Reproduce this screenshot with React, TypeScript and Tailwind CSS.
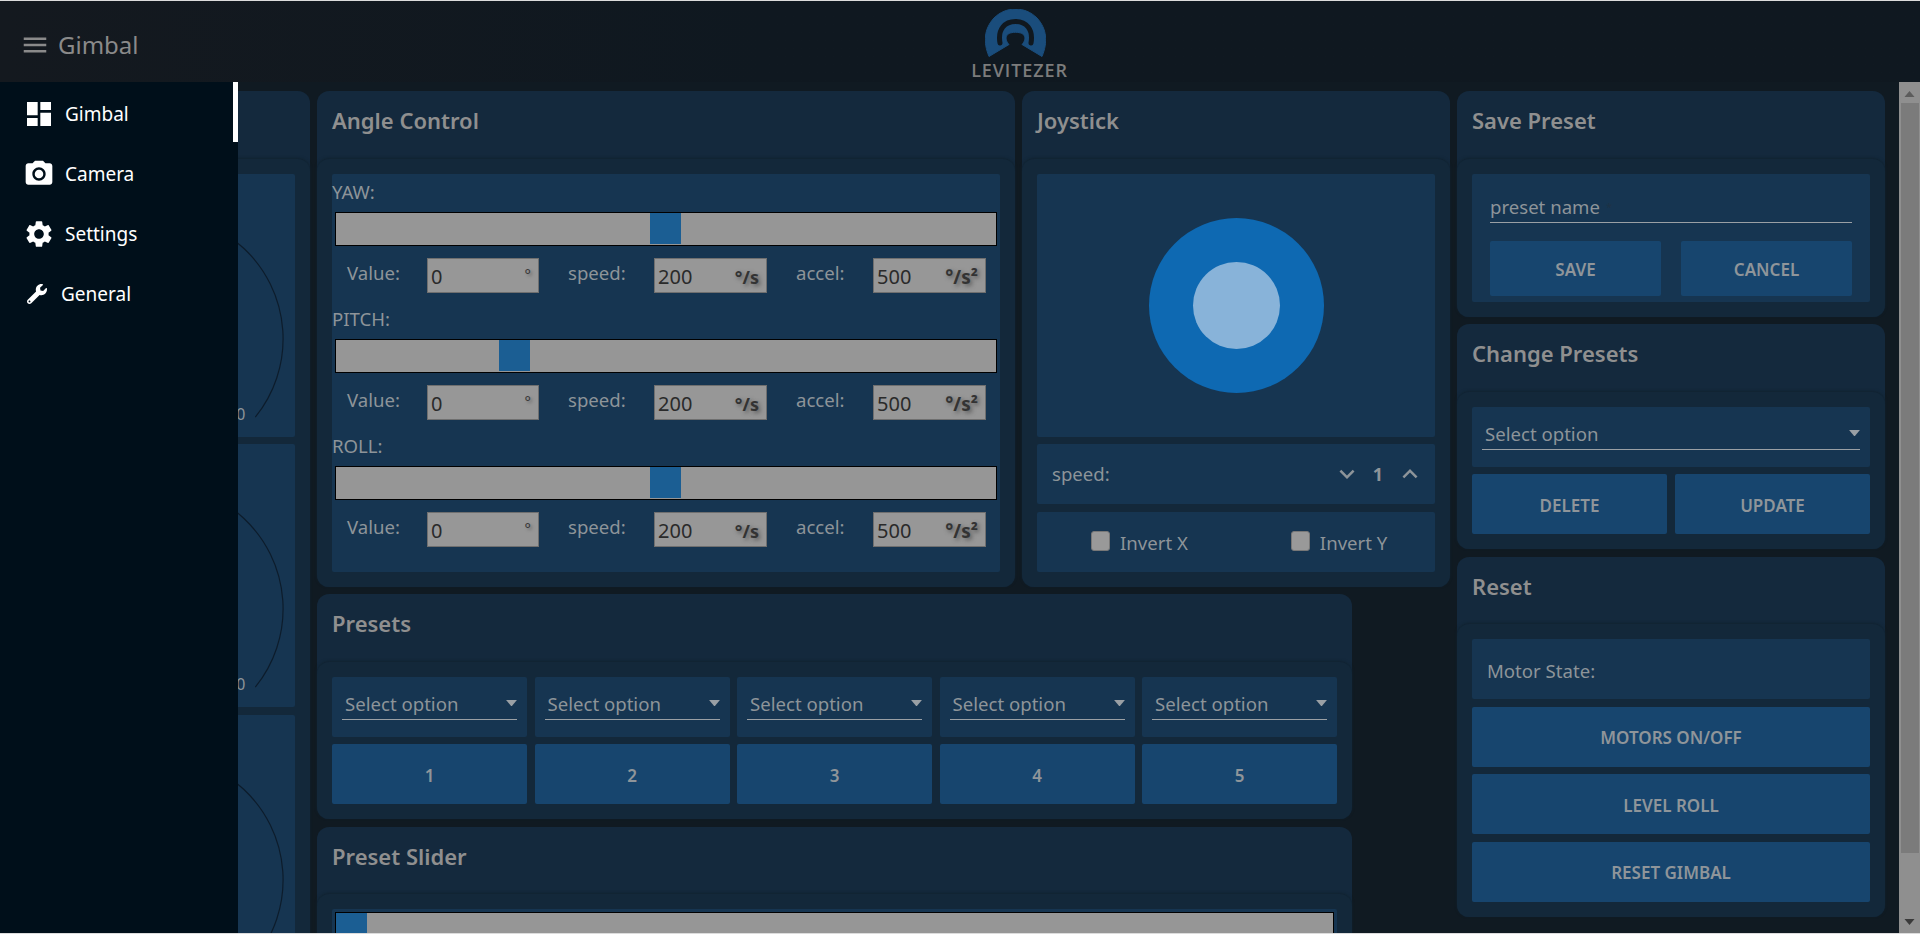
import React from "react";
import { FaWrench } from "react-icons/fa";

const FONT = "font-['Noto_Sans','Open_Sans',sans-serif]";

function Mui({ d, size = 32, className = "" }: { d: string; size?: number; className?: string }) {
  return (
    <svg viewBox="0 0 24 24" width={size} height={size} fill="currentColor" className={`block shrink-0 ${className}`}>
      <path d={d} />
    </svg>
  );
}

const MENU = "M3 18h18v-2H3v2zm0-5h18v-2H3v2zm0-7v2h18V6H3z";
const DASH = "M3 13h8V3H3v10zm0 8h8v-6H3v6zm10 0h8V11h-8v10zm0-18v6h8V3h-8z";
const CAMERA =
  "M9 2 7.17 4H4c-1.1 0-2 .9-2 2v12c0 1.1.9 2 2 2h16c1.1 0 2-.9 2-2V6c0-1.1-.9-2-2-2h-3.17L15 2H9zm3 15c-2.76 0-5-2.24-5-5s2.24-5 5-5 5 2.24 5 5-2.24 5-5 5zm0-8.2a3.2 3.2 0 1 0 0 6.4 3.2 3.2 0 0 0 0-6.4z";
const GEAR =
  "M19.14 12.94c.04-.3.06-.61.06-.94 0-.32-.02-.64-.07-.94l2.03-1.58c.18-.14.23-.41.12-.61l-1.92-3.32c-.12-.22-.37-.29-.59-.22l-2.39.96c-.5-.38-1.03-.7-1.62-.94l-.36-2.54c-.04-.24-.24-.41-.48-.41h-3.84c-.24 0-.43.17-.47.41l-.36 2.54c-.59.24-1.13.57-1.62.94l-2.39-.96c-.22-.08-.47 0-.59.22L2.74 8.87c-.12.21-.08.47.12.61l2.03 1.58c-.05.3-.09.63-.09.94s.02.64.07.94l-2.03 1.58c-.18.14-.23.41-.12.61l1.92 3.32c.12.22.37.29.59.22l2.39-.96c.5.38 1.03.7 1.62.94l.36 2.54c.05.24.24.41.48.41h3.84c.24 0 .44-.17.47-.41l.36-2.54c.59-.24 1.13-.56 1.62-.94l2.39.96c.22.08.47 0 .59-.22l1.92-3.32c.12-.22.07-.47-.12-.61l-2.01-1.58zM12 15.6c-1.98 0-3.6-1.62-3.6-3.6s1.62-3.6 3.6-3.6 3.6 1.62 3.6 3.6-1.62 3.6-3.6 3.6z";
const DOWN = "M16.59 8.59 12 13.17 7.41 8.59 6 10l6 6 6-6z";
const UP = "m12 8-6 6 1.41 1.41L12 10.83l4.59 4.58L18 14z";

function Logo() {
  return (
    <div className="flex flex-col items-center w-[95px]">
      <svg viewBox="0 0 61 48" width={61} height={48} className="block mt-[8px] mr-[8px]">
        <path
          d="M4 47.5 C-2 33 -1 20 9 9 C21 -3 40 -3 52 9 C62 20 63 33 57 47.5 L37 35.5 C42 30 41 23.3 30.5 23.3 C20 23.3 19 30 24 35.5 Z"
          fill="#1a4d7c"
          stroke="#1a4d7c"
          strokeWidth="1"
          strokeLinejoin="round"
        />
        <path
          d="M15 34 C12.5 20 20 12.5 30.5 12.5 C41 12.5 48.5 20 46 34"
          fill="none"
          stroke="#10181f"
          strokeWidth="5"
          strokeLinecap="round"
        />
      </svg>
      <div className="mt-[3px] text-[18px] leading-[20px] font-semibold tracking-[0.9px] text-[#7c7c7c] font-['Open_Sans',sans-serif]">
        LEVITEZER
      </div>
    </div>
  );
}

function Card({ title, children, className = "" }: { title?: string; children: React.ReactNode; className?: string }) {
  return (
    <div className={`rounded-[12px] bg-[#14293d] ${className}`}>
      <div className="h-[67.5px] px-[15px] pt-[14px] text-[22px] leading-[30px] font-semibold text-[#8f8f8f]">{title}</div>
      <div className="rounded-[12px] bg-[#13283a] p-[15px] shadow-[0_-1px_3px_#10222f]">{children}</div>
    </div>
  );
}

function Unit({ children, size }: { children: React.ReactNode; size: string }) {
  return <span className={`font-bold text-[#333] [text-shadow:2px_2px_4px_#555] ${size}`}>{children}</span>;
}

function Field({ value, unit, w }: { value: string; unit: React.ReactNode; w: string }) {
  return (
    <div className={`${w} h-[35px] shrink-0 flex items-center justify-between pl-[3px] pr-[7px] pt-[3px] bg-[#979797] border border-[#6f6f6f] text-[#2a2a2a] text-[20px] leading-[24px]`}>
      <span>{value}</span>
      {unit}
    </div>
  );
}

function Label({ w, ml, children }: { w: string; ml: string; children: React.ReactNode }) {
  return <div className={`${w} ${ml} mt-[3px] shrink-0 text-[18.6px] leading-[24px] text-[#8d9499]`}>{children}</div>;
}

function Axis({ name, thumb, first }: { name: string; thumb: string; first?: boolean }) {
  return (
    <div className={first ? "" : "mt-[15px]"}>
      <div className="h-[24px] text-[18.6px] leading-[22px] text-[#8d9499]">{name}</div>
      <div className={`mt-[7px] mx-[3px] h-[34px] bg-[#969696] border border-black pb-[1px] flex ${thumb}`}>
        <div className="w-[31px] bg-[#1b5e93]" />
      </div>
      <div className="mt-[12px] pl-[15px] flex items-start">
        <Label w="w-[80px]" ml="">Value:</Label>
        <Field w="w-[112px]" value="0" unit={<span className="text-[#333] -mt-[6px] text-[15px] [text-shadow:2px_2px_3px_#666]">°</span>} />
        <Label w="w-[86px]" ml="ml-[29px]">speed:</Label>
        <Field w="w-[113px]" value="200" unit={<Unit size="text-[18px]">°/s</Unit>} />
        <Label w="w-[77px]" ml="ml-[29px]">accel:</Label>
        <Field w="w-[113px]" value="500" unit={<Unit size="text-[19px]">°/s²</Unit>} />
      </div>
    </div>
  );
}

function Panel({ children, className = "" }: { children?: React.ReactNode; className?: string }) {
  return <div className={`rounded-[2px] bg-[#163551] ${className}`}>{children}</div>;
}

function Btn({ children, className = "" }: { children: React.ReactNode; className?: string }) {
  return (
    <div className={`h-[60px] pt-[3px] rounded-[2px] bg-[#17456e] flex items-center justify-center text-[17px] font-semibold text-[#8f959a] ${className}`}>
      {children}
    </div>
  );
}

function SelectBox({ inset }: { inset: string }) {
  return (
    <Panel className={`h-[60px] ${inset} pt-[15px]`}>
      <div className="h-[28px] border-b border-[#9aa0a5] pl-[3px] flex items-start justify-between text-[18.6px] leading-[24px] text-[#8d9499]">
        <span>Select option</span>
        <svg viewBox="0 0 10 6" width={11} height={6.5} className="mt-[8px] block">
          <path d="M0 0h10L5 6z" fill="#9aa0a5" />
        </svg>
      </div>
    </Panel>
  );
}

function Gauge({ zero = true }: { zero?: boolean }) {
  return (
    <Panel className="h-[263px]">
      <svg viewBox="0 0 274 263" className="block w-full h-full">
        <path d="M40 244 A125 125 0 1 1 234 244" fill="none" stroke="#0d1c2b" strokeWidth="1.2" />
        {zero && (
          <text x="224" y="247" textAnchor="end" fontSize="16" fill="#8d9499">0</text>
        )}
      </svg>
    </Panel>
  );
}

const menuItems = [
  { label: "Gimbal", d: DASH },
  { label: "Camera", d: CAMERA },
  { label: "Settings", d: GEAR },
];

function Invert({ label, ml }: { label: string; ml: string }) {
  return (
    <div className={`${ml} flex items-center`}>
      <div className="w-[19px] h-[20px] -mt-[4px] rounded-[3px] bg-[#999] border border-[#777]" />
      <span className="ml-[10px]">{label}</span>
    </div>
  );
}

export default function App() {
  return (
    <div className={`h-[934px] w-full overflow-hidden flex flex-col bg-[#101a22] ${FONT}`}>
      <div className="h-px shrink-0 bg-[#dcdcdc]" />
      <header className="h-[81px] shrink-0 flex bg-linear-to-r from-[#14191f] to-[#0f1820] to-40%">
        <div className="w-[972px] shrink-0 flex items-center pl-[20px] text-[#8a8a8a] pt-[6px]">
          <Mui d={MENU} size={30} />
          <span className="ml-[8px] text-[24px] leading-[32px]">Gimbal</span>
        </div>
        <Logo />
      </header>
      <div className="relative flex-1 min-h-0 flex overflow-hidden">
        <nav className="absolute inset-y-0 left-0 w-[238px] z-10 bg-[#000f1a] text-white pt-[2px]">
          <div className="absolute right-0 top-0 w-[5px] h-[60px] bg-white" />
          {menuItems.map((m) => (
            <div key={m.label} className="h-[60px] flex items-center pl-[23px]">
              <Mui d={m.d} size={32} />
              <span className="ml-[10px] text-[19px] leading-[24px]">{m.label}</span>
            </div>
          ))}
          <div className="h-[60px] flex items-center pl-[27px]">
            <FaWrench size={20} />
            <span className="ml-[14px] text-[19px] leading-[24px]">General</span>
          </div>
        </nav>

        <main className="flex-1 min-w-0 overflow-hidden flex gap-[7.5px] pl-[7.5px] pt-[9px]">
          <div className="w-[302px] shrink-0">
            <Card>
              <div className="flex flex-col gap-[7.5px]">
                <Gauge />
                <Gauge />
                <Gauge zero={false} />
              </div>
            </Card>
          </div>

          <div className="w-[1132.5px] shrink-0 flex flex-col gap-[7.5px]">
            <div className="flex gap-[7px]">
              <Card title="Angle Control" className="w-[698px] shrink-0">
                <Panel className="h-[398px] pt-[7px]">
                  <Axis name="YAW:" thumb="justify-center pr-[1px]" first />
                  <Axis name="PITCH:" thumb="pl-[163px]" />
                  <Axis name="ROLL:" thumb="justify-center pr-[1px]" />
                </Panel>
              </Card>
              <Card title="Joystick" className="w-[427.5px] shrink-0">
                <div className="flex flex-col gap-[7.5px]">
                  <Panel className="h-[263px] pl-[1px] flex items-center justify-center">
                    <div className="w-[175px] h-[175px] rounded-full bg-[#0e69b2] flex items-center justify-center">
                      <div className="w-[87px] h-[87px] rounded-full bg-[#88b3d9]" />
                    </div>
                  </Panel>
                  <Panel className="h-[60px] flex items-center pl-[15px] pr-[10px] text-[18.6px] text-[#8d9499]">
                    <span className="flex-1">speed:</span>
                    <Mui d={DOWN} size={30} />
                    <span className="w-[33px] text-center font-bold text-[18px]">1</span>
                    <Mui d={UP} size={30} />
                  </Panel>
                  <Panel className="h-[60px] flex items-center text-[18.6px] text-[#8d9499] pt-[3px]">
                    <Invert label="Invert X" ml="ml-[54px]" />
                    <Invert label="Invert Y" ml="ml-[103px]" />
                  </Panel>
                </div>
              </Card>
            </div>
            <Card title="Presets" className="w-[1035px]">
              <div className="grid grid-cols-5 gap-[7.5px]">
                {[1, 2, 3, 4, 5].map((n) => (
                  <SelectBox key={n} inset="px-[10px]" />
                ))}
                {[1, 2, 3, 4, 5].map((n) => (
                  <Btn key={n}>{n}</Btn>
                ))}
              </div>
            </Card>
            <Card title="Preset Slider" className="w-[1035px]">
              <Panel className="pt-[3px] h-[60px]">
                <div className="mx-[3px] h-[34px] bg-[#969696] border border-black flex">
                  <div className="w-[31px] bg-[#1b5e93]" />
                </div>
              </Panel>
            </Card>
          </div>

          <div className="w-[428px] shrink-0 flex flex-col gap-[7.5px]">
            <Card title="Save Preset">
              <Panel className="h-[128px] px-[18px] pt-[21px]">
                <div className="h-[28px] border-b border-[#9aa0a5] text-[18.6px] leading-[24px] text-[#8d9499]">
                  preset name
                  <span className="ml-[6px] align-top text-[11px] text-[#1d3245]">*</span>
                </div>
                <div className="mt-[18px] flex gap-[20px]">
                  <Btn className="flex-1 !h-[55px]">SAVE</Btn>
                  <Btn className="flex-1 !h-[55px]">CANCEL</Btn>
                </div>
              </Panel>
            </Card>
            <Card title="Change Presets">
              <SelectBox inset="px-[10px]" />
              <div className="mt-[7.5px] flex gap-[8px]">
                <Btn className="flex-1">DELETE</Btn>
                <Btn className="flex-1">UPDATE</Btn>
              </div>
            </Card>
            <Card title="Reset">
              <div className="flex flex-col gap-[7.5px]">
                <Panel className="h-[60px] flex items-center pl-[15px] pt-[4px] text-[18.6px] text-[#8d9499]">Motor State:</Panel>
                <Btn>MOTORS ON/OFF</Btn>
                <Btn>LEVEL ROLL</Btn>
                <Btn>RESET GIMBAL</Btn>
              </div>
            </Card>
          </div>
        </main>

        <div className="w-[21px] shrink-0 bg-[#8f8f8f] flex flex-col items-center">
          <svg viewBox="0 0 10 6" width={11} height={6} className="mt-[9px] block shrink-0">
            <path d="M5 0l5 6H0z" fill="#5c5c5c" />
          </svg>
          <div className="mt-[6px] w-[18px] h-[750px] bg-[#7b7b7b]" />
          <svg viewBox="0 0 10 6" width={11} height={6} className="mt-[66px] block shrink-0">
            <path d="M0 0h10L5 6z" fill="#3a3a3a" />
          </svg>
        </div>
      </div>
      <div className="h-px shrink-0 bg-[#dcdcdc]" />
    </div>
  );
}
